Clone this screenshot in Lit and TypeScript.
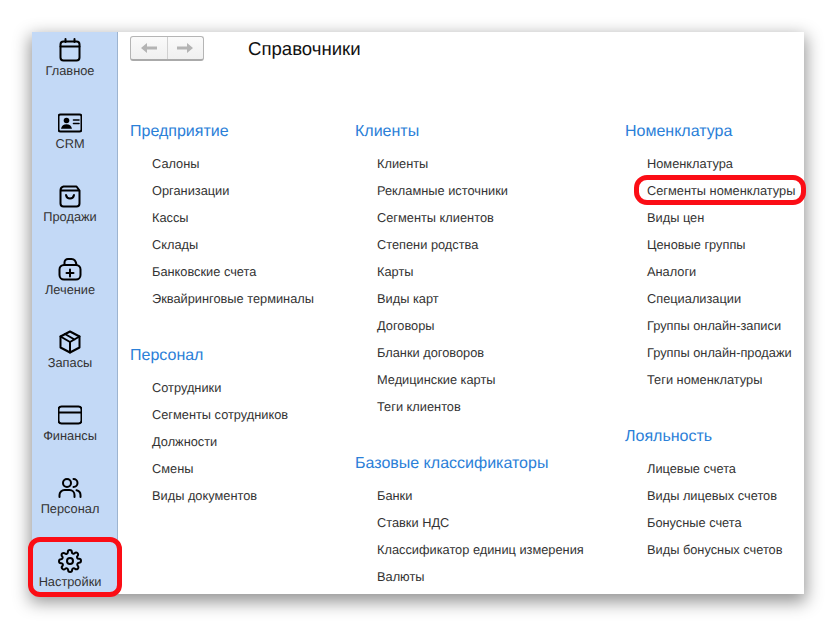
import { LitElement, html, css, svg } from "lit";
import { customElement } from "lit/decorators.js";

const s = (c: unknown) => html`<svg class="ico" viewBox="0 0 24 24" fill="none" stroke="#000" stroke-width="2" stroke-linecap="round" stroke-linejoin="round">${c}</svg>`;

const nav = [
  { t: "Главное", i: s(svg`<rect x="2.500" y="3.500" width="19" height="19" rx="3"/><path d="M2.500 8.500h19M7.500 1v3M16.500 1v3"/>`) },
  { t: "CRM", i: s(svg`<rect x="0.500" y="3.500" width="23" height="17" rx="2"/><circle cx="8.500" cy="9.500" r="2.800" fill="#000" stroke="none"/><path d="M3 17.800c.6-3.200 2.800-4.500 5.500-4.500s4.900 1.300 5.500 4.500z" fill="#000" stroke="none"/><path d="M15.500 9h5.500M15.500 12.500h5.500" stroke-width="1.600"/>`) },
  { t: "Продажи", i: s(svg`<path d="M5.500 2.500h13l3 4v13a3 3 0 0 1-3 3h-13a3 3 0 0 1-3-3v-13a4 4 0 0 1 3-4zM2.800 6.500h18.500"/><path d="M8 11c.5 2.500 2 3.500 4 3.500s3.500-1 4-3.500"/>`) },
  { t: "Лечение", i: s(svg`<rect x="1.500" y="8" width="21" height="14.500" rx="4.500"/><path d="M6.500 8V5.500a3.500 3.500 0 0 1 3.500-3.500h3.500c2.800 0 4.500 2 5 6"/><path d="M12 12.500v7M8.500 16h7"/>`) },
  { t: "Запасы", i: s(svg`<path d="M12 1.500l9.500 5v11L12 22.500l-9.500-5v-11z"/><path d="M2.500 6.500L12 12l9.500-5.500M12 12v10.500M7 4l9.500 5.500"/>`) },
  { t: "Финансы", i: s(svg`<rect x="0.500" y="3.500" width="23" height="17" rx="3"/><path d="M0.500 9.500h23"/>`) },
  { t: "Персонал", i: s(svg`<circle cx="9" cy="7" r="4"/><path d="M1.500 21v-2a5 5 0 0 1 5-5h5a5 5 0 0 1 5 5v2M15.500 3a4 4 0 0 1 0 8M22.500 21v-2a5 5 0 0 0-4-4.800"/>`) },
  { t: "Настройки", i: s(svg`<circle cx="12" cy="12" r="3"/><path d="M19.400 15a1.650 1.650 0 0 0 .330 1.820l.060.060a2 2 0 1 1-2.830 2.830l-.060-.060a1.650 1.650 0 0 0-2.800 1.170V21a2 2 0 0 1-4 0v-.090a1.650 1.650 0 0 0-2.800-1.120l-.060.060a2 2 0 1 1-2.830-2.830l.060-.060a1.650 1.650 0 0 0-1.170-2.800H3a2 2 0 0 1 0-4h.090a1.650 1.650 0 0 0 1.120-2.800l-.060-.060a2 2 0 1 1 2.830-2.830l.060.060a1.650 1.650 0 0 0 2.800-1.170V3a2 2 0 0 1 4 0v.090a1.650 1.650 0 0 0 2.800 1.120l.060-.060a2 2 0 1 1 2.830 2.830l-.060.060a1.650 1.650 0 0 0 1.170 2.800H21a2 2 0 0 1 0 4h-.090a1.650 1.650 0 0 0-1.510 1z"/>`) },
];

const cols: { w: number; groups: [string, string[]][] }[] = [
  { w: 225, groups: [
    ["Предприятие", ["Салоны", "Организации", "Кассы", "Склады", "Банковские счета", "Эквайринговые терминалы"]],
    ["Персонал", ["Сотрудники", "Сегменты сотрудников", "Должности", "Смены", "Виды документов"]],
  ]},
  { w: 270, groups: [
    ["Клиенты", ["Клиенты", "Рекламные источники", "Сегменты клиентов", "Степени родства", "Карты", "Виды карт", "Договоры", "Бланки договоров", "Медицинские карты", "Теги клиентов"]],
    ["Базовые классификаторы", ["Банки", "Ставки НДС", "Классификатор единиц измерения", "Валюты"]],
  ]},
  { w: 179, groups: [
    ["Номенклатура", ["Номенклатура", "Сегменты номенклатуры", "Виды цен", "Ценовые группы", "Аналоги", "Специализации", "Группы онлайн-записи", "Группы онлайн-продажи", "Теги номенклатуры"]],
    ["Лояльность", ["Лицевые счета", "Виды лицевых счетов", "Бонусные счета", "Виды бонусных счетов"]],
  ]},
];

@customElement("app-root")
export class AppRoot extends LitElement {
  static styles = css`
    :host { display: block; padding: 32px; width: 836px; height: 626px; box-sizing: border-box; background: #fff; font-family: "Liberation Sans", Arial, sans-serif; overflow: hidden; text-rendering: geometricPrecision; }
    .win { position: relative; display: flex; width: 772px; height: 562px; background: #fff; box-shadow: 0 6px 16px 2px rgba(0,0,0,.42); }
    .side { flex: none; width: 76px; padding-right: 9px; background: #c3d9f6; border-right: 1px solid #9db4d0; display: flex; flex-direction: column; }
    .nav { height: 73px; flex: none; display: flex; flex-direction: column; align-items: center; color: #333; font-size: 12.800px; line-height: 14px; white-space: nowrap; }
    .ico { width: 24px; height: 24px; margin-top: 6px; margin-bottom: 2px; display: block; }
    .main { flex: 1; padding: 4px 0 0 12px; min-width: 0; }
    .top { display: flex; height: 25px; }
    .btns { width: 74px; height: 25px; box-sizing: border-box; border: 1px solid #b5b5b5; border-bottom: 2px solid #aaa; border-radius: 3px; background: linear-gradient(#fafafa, #f0f0f0); display: flex; }
    .btns div { flex: 1; display: flex; align-items: center; justify-content: center; }
    .btns div + div { border-left: 1px solid #d0d0d0; }
    .btns svg { width: 16px; height: 12px; }
    .title { margin-left: 44px; font-size: 18.600px; line-height: 20px; margin-top: 3px; color: #111; }
    .cols { display: flex; margin-top: 59px; }
    .col { flex: none; }
    .group + .group { margin-top: 31px; }
    .h { color: #2b80d8; font-size: 16px; line-height: 24px; height: 22px; margin-bottom: 9px; }
    .it { padding-left: 22px; font-size: 12.800px; line-height: 25px; height: 27px; color: #333; white-space: nowrap; }
    .mark { position: absolute; box-sizing: border-box; border: 5px solid #fb0d15; pointer-events: none; }
    .m1 { left: -4px; top: 505px; width: 94px; height: 60px; border-radius: 12px; }
    .m2 { left: 602px; top: 143px; width: 172px; height: 30px; border-radius: 13px; }
  `;

  render() {
    return html`<div class="win">
      <div class="side">
        ${nav.map((n) => html`<div class="nav">${n.i}<span>${n.t}</span></div>`)}
      </div>
      <div class="main">
        <div class="top">
          <div class="btns">
            <div><svg viewBox="0 0 16 12"><path d="M0 6l6-5v3.500h10v3H6V11z" fill="#b4b4b4"/></svg></div>
            <div><svg viewBox="0 0 16 12"><path d="M16 6l-6-5v3.500H0v3h10V11z" fill="#b4b4b4"/></svg></div>
          </div>
          <div class="title">Справочники</div>
        </div>
        <div class="cols">
          ${cols.map((c) => html`<div class="col" style="width:${c.w}px">
            ${c.groups.map(([h, items]) => html`<div class="group">
              <div class="h">${h}</div>
              ${items.map((i) => html`<div class="it">${i}</div>`)}
            </div>`)}
          </div>`)}
        </div>
      </div>
      <div class="mark m1"></div>
      <div class="mark m2"></div>
    </div>`;
  }
}
